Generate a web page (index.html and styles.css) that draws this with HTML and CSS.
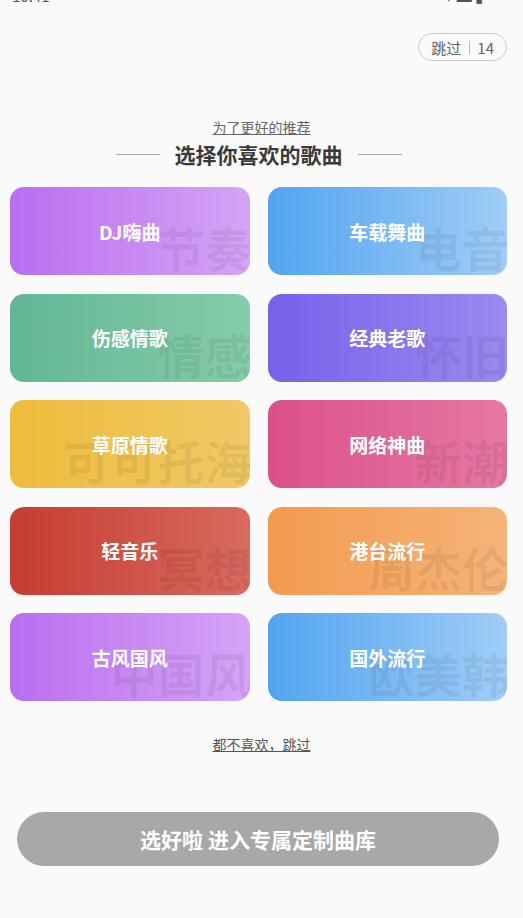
FILE: index.html
```html
<!DOCTYPE html>
<html lang="zh-CN">
<head>
    <meta charset="UTF-8">
    <meta name="viewport" content="width=device-width, initial-scale=1.0">
    <title>选择你喜欢的歌曲</title>
    <link rel="stylesheet" href="styles.css">
</head>
<body>
    <div class="status-bar">
        <span class="status-time">10:41</span>
        <span class="status-icons">▾ ▬ ▮</span>
    </div>

    <div class="top-bar">
        <div class="skip-pill">跳过<span class="skip-sep"></span>14</div>
    </div>

    <div class="title-container">
        <p class="subtitle">为了更好的推荐</p>
        <div class="heading-row">
            <span class="heading-line"></span>
            <h1>选择你喜欢的歌曲</h1>
            <span class="heading-line"></span>
        </div>
    </div>

    <div class="genre-grid">
        <div class="genre-card purple">
            <span class="genre-mark">节奏</span>
            <span class="genre-name">DJ嗨曲</span>
        </div>
        <div class="genre-card blue">
            <span class="genre-mark">电音</span>
            <span class="genre-name">车载舞曲</span>
        </div>
        <div class="genre-card green">
            <span class="genre-mark">情感</span>
            <span class="genre-name">伤感情歌</span>
        </div>
        <div class="genre-card indigo">
            <span class="genre-mark">怀旧</span>
            <span class="genre-name">经典老歌</span>
        </div>
        <div class="genre-card yellow">
            <span class="genre-mark">可可托海</span>
            <span class="genre-name">草原情歌</span>
        </div>
        <div class="genre-card pink">
            <span class="genre-mark">新潮</span>
            <span class="genre-name">网络神曲</span>
        </div>
        <div class="genre-card red">
            <span class="genre-mark">冥想</span>
            <span class="genre-name">轻音乐</span>
        </div>
        <div class="genre-card orange">
            <span class="genre-mark">周杰伦</span>
            <span class="genre-name">港台流行</span>
        </div>
        <div class="genre-card purple">
            <span class="genre-mark">中国风</span>
            <span class="genre-name">古风国风</span>
        </div>
        <div class="genre-card blue">
            <span class="genre-mark">欧美韩</span>
            <span class="genre-name">国外流行</span>
        </div>
    </div>

    <p class="skip-all">都不喜欢，跳过</p>

    <button class="submit-button">选好啦 进入专属定制曲库</button>
</body>
</html>
```

FILE: styles.css
```css
body {
    font-family: "Noto Sans CJK SC", "Noto Sans", sans-serif;
    background-color: #fafafa;
    margin: 0;
    color: #333333;
}

.status-bar {
    height: 6px;
    overflow: hidden;
    display: flex;
    justify-content: space-between;
    padding: 0 40px 0 12px;
}

.status-bar span {
    margin-top: -13px;
    font-size: 15px;
    line-height: 18px;
    color: #555555;
}

.top-bar {
    display: flex;
    justify-content: flex-end;
    padding: 27px 16px 0 0;
}

.skip-pill {
    display: flex;
    align-items: center;
    height: 26px;
    padding: 0 12px;
    border: 1px solid #cccccc;
    border-radius: 14px;
    font-size: 15px;
    color: #666666;
}

.skip-sep {
    width: 1px;
    height: 13px;
    background-color: #bbbbbb;
    margin: 0 7px 0 8px;
}

.title-container {
    margin-top: 57px;
    text-align: center;
}

.subtitle {
    margin: 0;
    font-size: 14px;
    line-height: 19px;
    color: #666666;
    text-decoration: underline;
}

.heading-row {
    display: flex;
    align-items: center;
    justify-content: center;
    margin-top: 3px;
    padding-right: 6px;
}

.heading-row h1 {
    margin: 0 15px;
    font-size: 21px;
    line-height: 28px;
    font-weight: bold;
    color: #3a3a3a;
}

.heading-line {
    width: 44px;
    height: 1px;
    background-color: #aaaaaa;
}

.genre-grid {
    display: grid;
    grid-template-columns: 1fr 1fr;
    gap: 18.5px 18px;
    padding: 0 16px 0 10px;
    margin-top: 19px;
}

.genre-card {
    position: relative;
    height: 88px;
    border-radius: 14px;
    overflow: hidden;
    display: flex;
    align-items: center;
    justify-content: center;
}

.genre-name {
    position: relative;
    font-size: 19px;
    font-weight: bold;
    color: #ffffff;
}

.genre-mark {
    position: absolute;
    right: -2px;
    bottom: 5px;
    font-size: 47px;
    line-height: 1;
    font-weight: bold;
    color: rgba(0, 0, 0, 0.06);
    white-space: nowrap;
}

.purple { background: linear-gradient(to right, #b96ef0, #d6a4f6); }
.blue { background: linear-gradient(to right, #52a4f0, #a0cdf7); }
.green { background: linear-gradient(to right, #62b696, #86cca9); }
.indigo { background: linear-gradient(to right, #7860ea, #9b8af0); }
.yellow { background: linear-gradient(to right, #eebc3c, #f0c866); }
.pink { background: linear-gradient(to right, #dc5088, #e678a4); }
.red { background: linear-gradient(to right, #c63c30, #d86a60); }
.orange { background: linear-gradient(to right, #f39a50, #f5b478); }

.skip-all {
    margin: 34px 0 0;
    text-align: center;
    font-size: 14px;
    line-height: 19px;
    color: #555555;
    text-decoration: underline;
}

.submit-button {
    display: block;
    width: calc(100% - 41px);
    height: 54px;
    margin: 58px 0 0 17px;
    border: none;
    border-radius: 27px;
    background-color: #a8a8a8;
    color: #ffffff;
    font-family: inherit;
    font-size: 21px;
    font-weight: bold;
}
```
